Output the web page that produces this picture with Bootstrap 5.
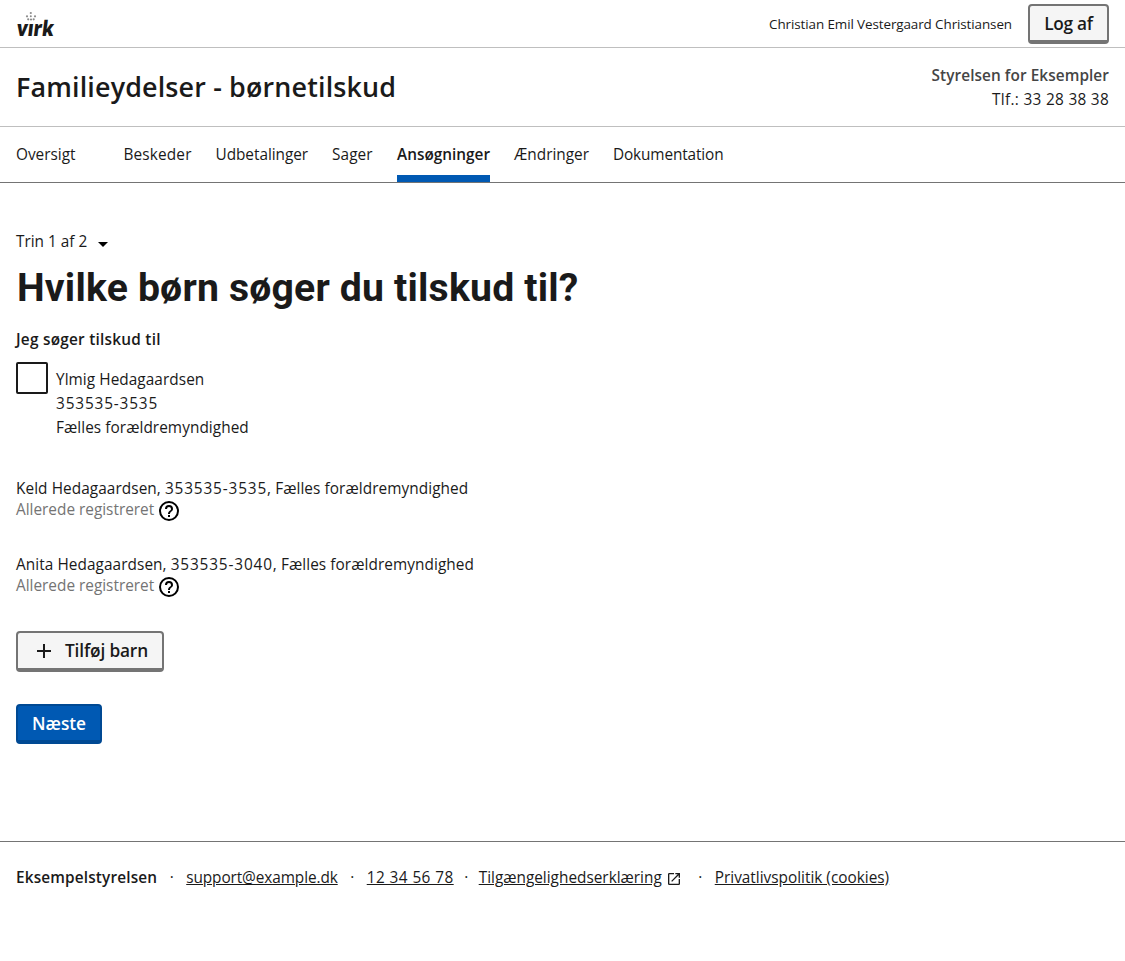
<!DOCTYPE html>
<html lang="da">
<head>
<meta charset="utf-8">
<meta name="viewport" content="width=device-width, initial-scale=1">
<title>Familieydelser - børnetilskud</title>
<link rel="stylesheet" href="https://cdn.jsdelivr.net/npm/bootstrap@5.3.0/dist/css/bootstrap.min.css">
<style>
body{font-family:"Open Sans",sans-serif;font-size:15.36px;line-height:24px;color:#1a1a1a;background:#fff;white-space:nowrap}
a,a:hover{color:inherit}
.fw-semi{font-weight:600}
.topbar{height:48px;border-bottom:1px solid #bfbfbf}
.solution{height:79px;border-bottom:1px solid #bfbfbf}
.user-name{font-size:13.44px;letter-spacing:-.1px}
.btn-virk{height:40px;padding:0 14px;border:2px solid #747474;border-bottom-width:4px;border-radius:4px;background:#f5f5f5;color:#1a1a1a;font-size:17.28px;font-weight:600;line-height:36px;letter-spacing:-.3px}
.btn-logout{width:81px}
.btn-add{width:148px;height:41px;margin-top:2px;letter-spacing:-.15px}
.btn-add svg{margin-right:9px}
.btn-next,.btn-next:hover{width:86px;background:#0059b3;border-color:#004993;color:#fff;letter-spacing:0;margin-top:32px}
.app-title{font-size:26.88px;font-weight:600;line-height:36px;letter-spacing:.16px;padding-top:21px}
.authority{color:#454545;font-weight:600;letter-spacing:.07px}
.phone{letter-spacing:.3px}
.mainnav{height:56px;border-bottom:1px solid #747474}
.mainnav .nav-link{padding:16px 0 0;color:inherit;height:55px;border-bottom:0 solid #0059b3}
.mainnav .nav-link.active{font-weight:600;border-bottom-width:7px}
.n1{width:59.5px}.n2{width:68px;letter-spacing:.15px}.n3{width:92.5px;letter-spacing:-.04px}.n4{width:41px;letter-spacing:.1px}.n5{width:93px}.n6{width:75px}
.n7{letter-spacing:-.13px}
.steps{margin-top:47px}
.steps svg{margin-top:-2px}
.page-title{font-family:Roboto,sans-serif;font-size:39.2px;font-weight:700;line-height:48px;letter-spacing:.17px;margin:10px 0 16px 1px}
.legend-text{letter-spacing:.24px}
.children{margin-top:10px}
.children label{padding-top:6px;letter-spacing:.06px}
.digits{letter-spacing:.85px}
.check-box{width:32px;height:32px;border:2px solid #1a1a1a;border-radius:2px!important;margin:0!important}
.registered{margin-top:37px}
.child{height:76px}
.child-line{letter-spacing:.07px}
.muted-text{color:#747474;line-height:18px}
.help{margin:-2px 0 0 3px}
.site-footer{border-top:1px solid #747474;padding-top:24px;margin-top:97px}
.dot{width:29px;text-align:center}
.dot-near{width:25px}
.mail{letter-spacing:-.09px}
.tel{letter-spacing:.43px}
.ext{margin:5px 4px 0 4px}
.foot-org{letter-spacing:.15px}
</style>
</head>
<body>
<header>
  <div class="topbar d-flex align-items-start justify-content-between px-3">
    <svg width="60" height="46" viewBox="0 0 60 46" aria-label="virk">
      <g fill="#8c8c8c"><circle cx="14.8" cy="13" r="1.100"/><circle cx="11" cy="16.300" r="1.100"/><circle cx="19" cy="16.300" r="1.100"/><circle cx="14.8" cy="16.300" r="1"/><circle cx="12.200" cy="19.300" r="1.100"/><circle cx="15" cy="19.500" r="1.100"/><circle cx="17.700" cy="19.300" r="1.100"/></g>
      <text transform="translate(0 36) skewX(-7)" x="0" y="0" font-family="Open Sans" font-weight="800" font-size="21.500" fill="#1a1a1a" textLength="37" lengthAdjust="spacingAndGlyphs">vırk</text>
    </svg>
    <div class="d-flex align-items-center gap-3 pt-1">
      <span class="user-name">Christian Emil Vestergaard Christiansen</span>
      <button class="btn btn-virk btn-logout">Log af</button>
    </div>
  </div>
  <div class="solution d-flex justify-content-between px-3">
    <div class="app-title">Familieydelser - børnetilskud</div>
    <div class="text-end pt-3"><div class="authority">Styrelsen for Eksempler</div><div class="phone">Tlf.: 33 28 38 38</div></div>
  </div>
  <nav class="mainnav px-3">
    <div class="nav flex-nowrap gap-4">
      <a class="nav-link n1 me-4" href="#">Oversigt</a>
      <a class="nav-link n2" href="#">Beskeder</a>
      <a class="nav-link n3" href="#">Udbetalinger</a>
      <a class="nav-link n4" href="#">Sager</a>
      <a class="nav-link n5 active" href="#">Ansøgninger</a>
      <a class="nav-link n6" href="#">Ændringer</a>
      <a class="nav-link n7" href="#">Dokumentation</a>
    </div>
  </nav>
</header>
<main class="px-3">
  <div class="steps d-flex align-items-center">Trin 1 af 2
    <svg class="ms-2" width="24" height="24" viewBox="0 0 24 24"><path d="M3 13h10l-5 5z" fill="#000"/></svg>
  </div>
  <h1 class="page-title">Hvilke børn søger du tilskud til?</h1>
  <div class="fw-semi legend-text">Jeg søger tilskud til</div>
  <div class="d-flex gap-2 children">
    <input class="form-check-input check-box flex-shrink-0" type="checkbox" id="c1">
    <label for="c1">Ylmig Hedagaardsen<br><span class="digits">353535-3535</span><br>Fælles forældremyndighed</label>
  </div>
  <div class="registered">
    <div class="child">
      <div class="child-line">Keld Hedagaardsen, <span class="digits">353535-3535</span>, Fælles forældremyndighed</div>
      <div class="d-flex muted-text">Allerede registreret
        <svg class="help" width="24" height="24" viewBox="0 0 24 24"><path fill="#000" d="M11 18h2v-2h-2zm1-16a10 10 0 1 0 0 20 10 10 0 0 0 0-20m0 18a8 8 0 1 1 0-16 8 8 0 0 1 0 16m0-14a4 4 0 0 0-4 4h2a2 2 0 1 1 4 0c0 2-3 1.750-3 5h2c0-2.250 3-2.500 3-5a4 4 0 0 0-4-4"/></svg>
      </div>
    </div>
    <div class="child">
      <div class="child-line">Anita Hedagaardsen, <span class="digits">353535-3040</span>, Fælles forældremyndighed</div>
      <div class="d-flex muted-text">Allerede registreret
        <svg class="help" width="24" height="24" viewBox="0 0 24 24"><path fill="#000" d="M11 18h2v-2h-2zm1-16a10 10 0 1 0 0 20 10 10 0 0 0 0-20m0 18a8 8 0 1 1 0-16 8 8 0 0 1 0 16m0-14a4 4 0 0 0-4 4h2a2 2 0 1 1 4 0c0 2-3 1.750-3 5h2c0-2.250 3-2.500 3-5a4 4 0 0 0-4-4"/></svg>
      </div>
    </div>
  </div>
  <button class="btn btn-virk btn-add d-flex align-items-center">
    <svg width="24" height="24" viewBox="0 0 24 24"><path d="M11 5h2v6h6v2h-6v6h-2v-6H5v-2h6z" fill="#1a1a1a"/></svg>Tilføj barn</button>
  <button class="btn btn-virk btn-next d-block">Næste</button>
</main>
<footer class="site-footer px-3 d-flex">
  <span class="fw-semi foot-org">Eksempelstyrelsen</span><span class="dot">·</span>
  <a class="mail" href="#">support@example.dk</a><span class="dot">·</span>
  <a class="tel" href="#">12 34 56 78</a><span class="dot dot-near">·</span>
  <a href="#">Tilgængelighedserklæring</a>
  <svg class="ext" width="16" height="16" viewBox="0 0 24 24"><path d="M19 19H5V5h7V3H5a2 2 0 0 0-2 2v14a2 2 0 0 0 2 2h14a2 2 0 0 0 2-2v-7h-2zM14 3v2h3.590l-9.830 9.830 1.410 1.410L19 6.410V10h2V3z" fill="#1a1a1a"/></svg>
  <span class="dot">·</span><a href="#">Privatlivspolitik (cookies)</a>
</footer>
<script src="https://cdn.jsdelivr.net/npm/bootstrap@5.3.0/dist/js/bootstrap.bundle.min.js"></script>
</body>
</html>
